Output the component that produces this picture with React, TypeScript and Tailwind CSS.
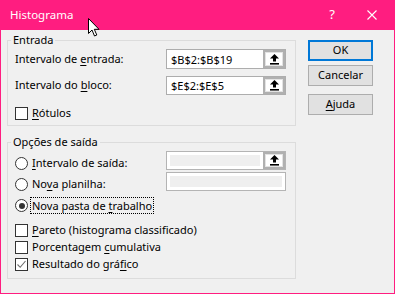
import React from "react";

const font = { fontFamily: '"Noto Sans", "Liberation Sans", sans-serif' };

const UploadIcon = () => (
  <svg width="9" height="11" viewBox="0 0 9 11">
    <polygon points="4.5,0 0,4.5 9,4.5" fill="#000" />
    <rect x="3" y="4" width="3" height="3.5" fill="#000" />
    <rect x="0" y="9" width="9" height="1.6" fill="#000" />
  </svg>
);

const PickButton = () => (
  <div className="w-[22px] h-full border-2 border-[#b0b0b0] bg-[#e3e3e3] p-[1px] flex">
    <div className="flex-1 bg-white flex items-center justify-center">
      <UploadIcon />
    </div>
  </div>
);

const RefInput = ({ value }: { value: string }) => (
  <div className="w-[120px] h-full border border-[#adadad] bg-white flex">
    <div className="flex-1 pl-[4px] text-[11px] leading-none flex items-center text-black">
      {value}
    </div>
    <PickButton />
  </div>
);

const DisabledInput = ({ button }: { button?: boolean }) => (
  <div className="w-[120px] h-full border border-[#b4b4b4] bg-white flex">
    <div className="flex-1 p-[3px]">
      <div className="w-full h-full bg-[#efefef]" />
    </div>
    {button && <PickButton />}
  </div>
);

const Checkbox = ({ checked }: { checked?: boolean }) => (
  <div className="w-[13px] h-[13px] border border-[#333] bg-white flex items-center justify-center shrink-0">
    {checked && (
      <svg width="11" height="11" viewBox="0 0 11 11">
        <path d="M1.5 5.5 L4.2 8.3 L9.5 2" fill="none" stroke="#6d6d6d" strokeWidth="1.1" />
      </svg>
    )}
  </div>
);

const Radio = ({ checked }: { checked?: boolean }) => (
  <div className="w-[13px] h-[13px] rounded-full border border-[#333] bg-white flex items-center justify-center shrink-0">
    {checked && <div className="w-[6px] h-[6px] rounded-full bg-[#333]" />}
  </div>
);

const U = ({ children }: { children: React.ReactNode }) => (
  <span className="underline underline-offset-2">{children}</span>
);

const DialogButton = ({ children, primary }: { children: React.ReactNode; primary?: boolean }) => (
  <div
    className={
      primary
        ? "w-[65px] h-[21px] border-2 border-[#0078d7] bg-[#e1e1e1] flex items-center justify-center text-[11px] text-black"
        : "w-[65px] h-[21px] border border-[#adadad] bg-[#e1e1e1] flex items-center justify-center text-[11px] text-black"
    }
  >
    {children}
  </div>
);

export default function App() {
  return (
    <div
      style={font}
      className="relative w-[395px] h-[294px] bg-[#ff1d80] flex flex-col px-[1px] pb-[1px] text-black overflow-hidden"
    >
      {/* Title bar */}
      <div className="h-[30px] shrink-0 flex items-center pl-[9px] text-white text-[11.5px]">
        <span className="flex-1">Histograma</span>
        <span className="w-[20px] text-center text-[13px] mr-[25px]">?</span>
        <svg width="10" height="10" viewBox="0 0 10 10" className="mr-[17px]">
          <path d="M0.5 0.5 L9.5 9.5 M9.5 0.5 L0.5 9.5" stroke="#fff" strokeWidth="1.1" />
        </svg>
      </div>

      {/* Body */}
      <div className="flex-1 bg-[#f0f0f0] flex pl-[6px] pt-[2px] pr-[20px]">
        <div className="w-[289px] flex flex-col">
          {/* Entrada */}
          <fieldset className="border border-[#dcdcdc] pl-[3px] pr-[9px] pb-[5px]">
            <legend className="px-[2px] text-[11px] leading-[16px]">Entrada</legend>
            <div className="pl-[4px] flex flex-col text-[11px]">
              <div className="h-[20px] mt-[1px] flex items-center justify-between">
                <span>
                  Intervalo de <U>e</U>ntrada:
                </span>
                <RefInput value="$B$2:$B$19" />
              </div>
              <div className="h-[19px] mt-[7px] flex items-center justify-between">
                <span>
                  Intervalo do <U>b</U>loco:
                </span>
                <RefInput value="$E$2:$E$5" />
              </div>
              <div className="h-[13px] mt-[12px] flex items-center gap-[4px]">
                <Checkbox />
                <span>
                  <U>R</U>ótulos
                </span>
              </div>
            </div>
          </fieldset>

          {/* Opções de saída */}
          <fieldset className="mt-[8px] border border-[#dcdcdc] pl-[3px] pr-[9px] pb-[5px]">
            <legend className="px-[2px] text-[11px] leading-[16px]">Opções de saída</legend>
            <div className="pl-[4px] flex flex-col text-[11px]">
              <div className="flex justify-between">
                <div className="flex flex-col pt-[3px]">
                  <div className="h-[21px] flex items-center gap-[4px]">
                    <Radio />
                    <span>
                      <U>I</U>ntervalo de saída:
                    </span>
                  </div>
                  <div className="h-[21px] flex items-center gap-[4px]">
                    <Radio />
                    <span>
                      No<U>v</U>a planilha:
                    </span>
                  </div>
                  <div className="h-[21px] flex items-center gap-[2px]">
                    <Radio checked />
                    <span className="border border-dotted border-black px-[1px] leading-[15px]">
                      Nova pasta de <U>t</U>rabalho
                    </span>
                  </div>
                </div>
                <div className="flex flex-col pt-[1px] gap-[2px]">
                  <div className="h-[19px]">
                    <DisabledInput button />
                  </div>
                  <div className="h-[19px]">
                    <DisabledInput />
                  </div>
                </div>
              </div>
              <div className="flex flex-col mt-[6px]">
                <div className="h-[17px] flex items-center gap-[4px]">
                  <Checkbox />
                  <span>
                    <U>P</U>areto (histograma classificado)
                  </span>
                </div>
                <div className="h-[17px] flex items-center gap-[4px]">
                  <Checkbox />
                  <span>
                    Porcentagem <U>c</U>umulativa
                  </span>
                </div>
                <div className="h-[17px] flex items-center gap-[4px]">
                  <Checkbox checked />
                  <span>
                    Resultado do grá<U>f</U>ico
                  </span>
                </div>
              </div>
            </div>
          </fieldset>
        </div>

        {/* Buttons */}
        <div className="ml-[12px] pt-[8px] flex flex-col">
          <DialogButton primary>OK</DialogButton>
          <div className="mt-[4px]">
            <DialogButton>Cancelar</DialogButton>
          </div>
          <div className="mt-[8px]">
            <DialogButton>
              <span>
                <U>A</U>juda
              </span>
            </DialogButton>
          </div>
        </div>
      </div>

      {/* Mouse cursor */}
      <svg width="13" height="20" viewBox="0 0 13 20" className="absolute left-[88px] top-[18px]">
        <path
          d="M0.5 0.5 L0.5 15.5 L4 12 L6.5 18 L8.8 17 L6.3 11.3 L11 11.3 Z"
          fill="#fff"
          stroke="#000"
          strokeWidth="1"
        />
      </svg>
    </div>
  );
}
